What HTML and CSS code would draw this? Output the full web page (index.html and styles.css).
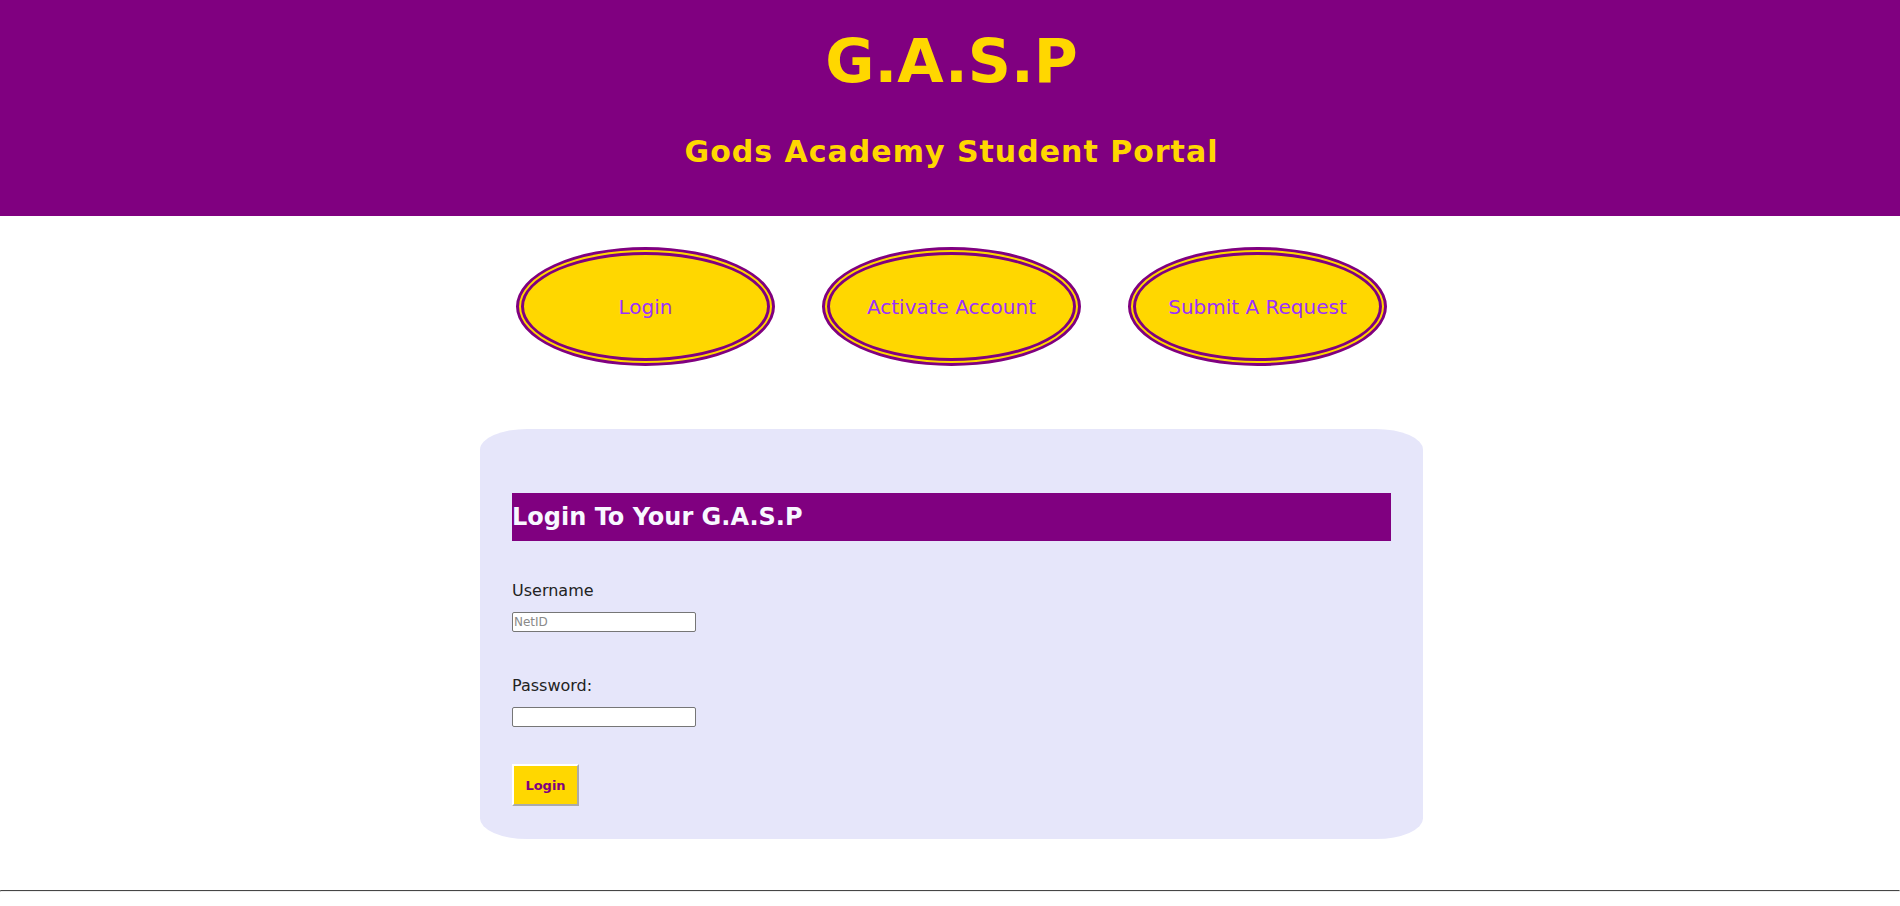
FILE: index.html
```html
<!DOCTYPE html>
<html lang="en">
<head>
<meta charset="utf-8">
<title>G.A.S.P</title>
<link rel="stylesheet" href="styles.css">
</head>
<body>
<header class="site-header">
  <h1 class="site-title">G.A.S.P</h1>
  <h2 class="site-subtitle">Gods Academy Student Portal</h2>
</header>
<nav class="oval-nav">
  <a class="oval" href="#">Login</a>
  <a class="oval" href="#">Activate Account</a>
  <a class="oval" href="#">Submit A Request</a>
</nav>
<main class="panel">
  <h2 class="panel-title">Login To Your G.A.S.P</h2>
  <form class="login-form">
    <label class="field-label" for="user">Username</label>
    <input class="field-input" id="user" type="text" placeholder="NetID">
    <label class="field-label pw-label" for="pw">Password:</label>
    <input class="field-input" id="pw" type="password">
    <button class="submit-btn" type="button">Login</button>
  </form>
</main>
<hr class="footer-rule">
</body>
</html>
```
FILE: styles.css
```css
html, body {
  margin: 0;
  padding: 0;
  background: #ffffff;
  font-family: "DejaVu Sans", Verdana, sans-serif;
}

.site-header {
  background: #800080;
  height: 216px;
  box-sizing: border-box;
  padding: 26px 0 0 3px;
  text-align: center;
  color: #ffd700;
}

.site-title {
  margin: 0;
  font-size: 60px;
  font-weight: bold;
  line-height: 70px;
}

.site-subtitle {
  margin: 38px 0 0;
  font-size: 30px;
  font-weight: bold;
  line-height: 35px;
  letter-spacing: 1px;
}

.oval-nav {
  display: flex;
  justify-content: center;
  gap: 47px;
  margin-top: 31px;
  padding-left: 3px;
}

.oval {
  width: 259px;
  height: 119px;
  box-sizing: border-box;
  border: 8px double #800080;
  border-radius: 50%;
  background: #ffd700;
  display: flex;
  align-items: center;
  justify-content: center;
  color: #9b30ff;
  font-size: 20px;
  text-decoration: none;
}

.panel {
  width: 943px;
  box-sizing: border-box;
  margin: 63px 0 0 calc(50% - 470px);
  padding: 64px 32px 33px;
  background: #e6e6fa;
  border-radius: 5%;
}

.panel-title {
  margin: 0;
  background: #800080;
  color: #f8f8ff;
  font-size: 24px;
  font-weight: bold;
  line-height: 28px;
  padding: 10px 0;
}

.login-form {
  display: flex;
  flex-direction: column;
  align-items: flex-start;
  padding-top: 40px;
}

.field-label {
  font-size: 16px;
  line-height: 19px;
  color: #222222;
}

.pw-label {
  margin-top: 44px;
}

.field-input {
  margin: 12px 0 0;
  width: 184px;
  height: 20px;
  box-sizing: border-box;
  font-family: "DejaVu Sans", Verdana, sans-serif;
  font-size: 12px;
  padding: 1px 1px;
  border: 1px solid #767676;
  border-radius: 2px;
  background: #ffffff;
}

.field-input::placeholder {
  color: #8a8a8a;
}

.submit-btn {
  margin-top: 37px;
  width: 67px;
  height: 42px;
  box-sizing: border-box;
  background: #ffd700;
  color: #800080;
  font-family: "DejaVu Sans", Verdana, sans-serif;
  font-size: 13px;
  font-weight: bold;
  border: 2px solid;
  border-color: #ffffff #aaaaaa #aaaaaa #ffffff;
  padding: 0;
}

.footer-rule {
  margin: 51px 0 0;
  border: 1px inset #eeeeee;
  border-top-color: #9a9a9a;
}
```
